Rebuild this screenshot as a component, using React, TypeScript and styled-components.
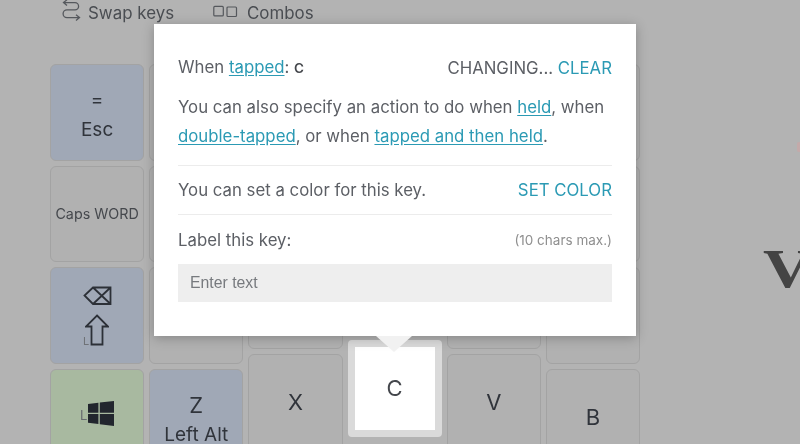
import React from "react";
import styled, { createGlobalStyle } from "styled-components";

const Global = createGlobalStyle`
  html, body { margin: 0; padding: 0; background: #b3b3b3; }
  body { font-family: Inter, "Noto Sans", sans-serif; }
`;

const Page = styled.div`
  position: relative;
  width: 800px;
  height: 444px;
  overflow: hidden;
  background: #b3b3b3;
  color: #33373e;
  filter: blur(0.35px);
`;

const Toolbar = styled.div`
  display: flex;
  align-items: center;
  height: 29px;
  padding: 0 0 3px 62px;
  box-sizing: border-box;
  font-size: 16.9px;
  color: #4a4d52;
`;

const ToolItem = styled.div<{ $w: number; $gap: number }>`
  display: flex;
  align-items: center;
  gap: ${(p) => p.$gap}px;
  width: ${(p) => p.$w}px;
`;

const ToolIcon = styled.svg<{ $lift: number }>`
  flex: none;
  margin-top: -${(p) => p.$lift}px;
  fill: none;
  stroke: #55585d;
`;

const Main = styled.div`
  display: flex;
  align-items: flex-start;
`;

const Keyboard = styled.div`
  display: flex;
  gap: 5px;
  padding-left: 50px;
`;

const Column = styled.div<{ $top: number }>`
  display: flex;
  flex-direction: column;
  gap: 5px;
  width: 94.2px;
  padding-top: ${(p) => p.$top}px;
`;

const tones: Record<string, string> = {
  plain: "#b1b1b1",
  blue: "#a0a8b6",
  green: "#a8b9a0",
};

const Key = styled.div<{ $tone?: string }>`
  position: relative;
  flex: none;
  height: 96.7px;
  box-sizing: border-box;
  display: flex;
  flex-direction: column;
  align-items: center;
  justify-content: center;
  border: 1px solid #a3a3a3;
  border-radius: 6px;
  background: ${(p) => tones[p.$tone || "plain"]};
  font-size: 19px;
  line-height: 24px;
  color: #30343b;
`;

const DualKey = styled(Key)`
  gap: 6px;
  padding-top: 5px;
`;

const SelectedKey = styled.div`
  flex: none;
  height: 96.7px;
  box-sizing: border-box;
  display: flex;
  align-items: center;
  justify-content: center;
  border: 7px solid #dadada;
  border-radius: 4px;
  background: #ffffff;
  font-size: 22px;
  color: #44474c;
`;

const BigLetter = styled.span`
  font-size: 22px;
`;

const SmallLabel = styled.span`
  font-size: 14.3px;
  color: #45484d;
  margin-top: -1px;
`;

const SideColumn = styled.div`
  display: flex;
  flex-direction: column;
  margin-left: 123px;
`;

const PinkMark = styled.div`
  width: 4px;
  height: 10px;
  margin: 113px 0 0 34px;
  border-radius: 2px;
  background: #c4aaaa;
`;

const SideWord = styled.div`
  margin-top: 85px;
  font-family: "Liberation Serif", serif;
  font-weight: 700;
  font-size: 54px;
  line-height: 64px;
  color: #444444;
  white-space: nowrap;
  transform: scaleX(1.25);
  transform-origin: left center;
`;

const Popover = styled.div`
  position: absolute;
  left: 154px;
  top: 24px;
  width: 482px;
  height: 312px;
  box-sizing: border-box;
  padding: 29px 24px 0;
  background: #ffffff;
  box-shadow: 0 2px 11px rgba(0, 0, 0, 0.25);
  font-size: 16.8px;
  line-height: 29px;
  color: #5c5f65;
`;

const Arrow = styled.div`
  position: absolute;
  left: 222px;
  top: 100%;
  width: 0;
  height: 0;
  border-left: 18px solid transparent;
  border-right: 18px solid transparent;
  border-top: 16px solid #f1f1f1;
`;

const Row = styled.div`
  display: flex;
  justify-content: space-between;
  align-items: center;
`;

const Strong = styled.span`
  font-weight: 600;
  font-size: 13.5px;
  color: #44474c;
`;

const TextLink = styled.a`
  color: #2b9ab4;
  text-decoration: underline;
  text-underline-offset: 2px;
`;

const Action = styled.span`
  color: #2b9ab4;
`;

const Para = styled.p`
  margin: 10px 0 14px;
`;

const SectionRow = styled(Row)`
  border-top: 1px solid #ececec;
  padding: 10px 0 9px;
`;

const LabelRow = styled(Row)`
  border-top: 1px solid #ececec;
  padding: 1px 0 0;
  height: 50px;
  box-sizing: border-box;
  line-height: 26px;
`;

const Hint = styled.span`
  font-size: 13.5px;
  color: #8f8f8f;
`;

const TextInput = styled.input`
  display: block;
  width: 100%;
  height: 38px;
  box-sizing: border-box;
  border: 0;
  padding: 0 12px;
  background: #eeeeee;
  font-family: "Liberation Sans", sans-serif;
  font-size: 15.8px;
  color: #33373e;
  &::placeholder { color: #777a7e; opacity: 1; }
`;

const SwapIcon = () => (
  <ToolIcon $lift={4} width="19" height="24" viewBox="0 0 19 24" strokeWidth="1.3">
    <path d="M5 0.8 L1.5 3.6 L5 6.4 M1.5 3.6 H13 A3.6 3.6 0 0 1 13 10.8 H5 A3.9 3.9 0 0 0 5 18.6 H17.5 M14 15.8 L17.5 18.6 L14 21.4" />
  </ToolIcon>
);

const CombosIcon = () => (
  <ToolIcon $lift={2} width="25" height="14" viewBox="0 0 25 14" strokeWidth="1.2">
    <rect x="0.8" y="1.4" width="9.5" height="9.5" rx="1" />
    <rect x="14" y="2" width="9.5" height="9.5" rx="1" />
  </ToolIcon>
);

const BackspaceIcon = () => (
  <svg width="29" height="20" viewBox="0 0 29 20" fill="none" stroke="#2c3037" strokeWidth="1.8">
    <path d="M27.5 1.5 H10 L1.5 9.5 L10 18 H27.5 Z M10 1.5 L27.5 18 M27.5 1.5 L10 18" />
  </svg>
);

const ShiftIcon = () => (
  <svg width="24" height="32" viewBox="0 0 24 32" fill="none" stroke="#2c3037" strokeWidth="1.8">
    <path d="M12 1.5 L23 12.5 H17.5 V30.5 H6.5 V12.5 H1 Z" />
  </svg>
);

const WindowsIcon = () => (
  <svg width="26" height="25" viewBox="0 0 26 25" fill="#22262e">
    <path d="M0 3 L10.4 1.8 V11.7 H0 Z M11.8 1.6 L26 0 V11.7 H11.8 Z M0 13 H10.4 V22.9 L0 21.7 Z M11.8 13 H26 V25 L11.8 23.2 Z" />
  </svg>
);

const Stack = styled.div`
  display: flex;
  flex-direction: column;
  align-items: center;
  gap: 8px;
`;

const ShiftWrap = styled.div`
  position: relative;
  display: flex;
`;

const ShiftMark = styled.span`
  position: absolute;
  left: -2px;
  bottom: -1px;
  font-size: 11px;
  line-height: 12px;
  color: #6f7277;
`;

const WinWrap = styled.div`
  display: flex;
  align-items: flex-end;
  gap: 1px;
  margin: 0 0 8px 0;
`;

const WinMark = styled.span`
  font-size: 13px;
  line-height: 14px;
  margin-bottom: 4px;
  color: #676a6f;
`;

export default function App() {
  return (
    <Page>
      <Global />
      <Toolbar>
        <ToolItem $w={151} $gap={7}>
          <SwapIcon />
          Swap keys
        </ToolItem>
        <ToolItem $w={120} $gap={9}>
          <CombosIcon />
          Combos
        </ToolItem>
      </Toolbar>
      <Main>
        <Keyboard>
          <Column $top={35}>
            <DualKey $tone="blue">
              <span>=</span>
              <span>Esc</span>
            </DualKey>
            <Key>
              <SmallLabel>Caps WORD</SmallLabel>
            </Key>
            <Key $tone="blue">
              <Stack>
                <BackspaceIcon />
                <ShiftWrap>
                  <ShiftMark>L</ShiftMark>
                  <ShiftIcon />
                </ShiftWrap>
              </Stack>
            </Key>
            <Key $tone="green">
              <WinWrap>
                <WinMark>L</WinMark>
                <WindowsIcon />
              </WinWrap>
            </Key>
          </Column>
          <Column $top={35}>
            <Key />
            <Key />
            <Key />
            <DualKey $tone="blue">
              <BigLetter>Z</BigLetter>
              <span>Left Alt</span>
            </DualKey>
          </Column>
          <Column $top={20}>
            <Key />
            <Key />
            <Key />
            <Key>
              <BigLetter>X</BigLetter>
            </Key>
          </Column>
          <Column $top={6}>
            <Key />
            <Key />
            <Key />
            <SelectedKey>C</SelectedKey>
          </Column>
          <Column $top={20}>
            <Key />
            <Key />
            <Key />
            <Key>
              <BigLetter>V</BigLetter>
            </Key>
          </Column>
          <Column $top={35}>
            <Key />
            <Key />
            <Key />
            <Key>
              <BigLetter>B</BigLetter>
            </Key>
          </Column>
        </Keyboard>
        <SideColumn>
          <PinkMark />
          <SideWord>V</SideWord>
        </SideColumn>
      </Main>
      <Popover>
        <Row>
          <span>
            When <TextLink>tapped</TextLink>: <Strong>C</Strong>
          </span>
          <span>
            CHANGING... <Action>CLEAR</Action>
          </span>
        </Row>
        <Para>
          You can also specify an action to do when <TextLink>held</TextLink>, when{" "}
          <TextLink>double-tapped</TextLink>, or when <TextLink>tapped and then held</TextLink>.
        </Para>
        <SectionRow>
          <span>You can set a color for this key.</span>
          <Action>SET COLOR</Action>
        </SectionRow>
        <LabelRow>
          <span>Label this key:</span>
          <Hint>(10 chars max.)</Hint>
        </LabelRow>
        <TextInput placeholder="Enter text" />
        <Arrow />
      </Popover>
    </Page>
  );
}
